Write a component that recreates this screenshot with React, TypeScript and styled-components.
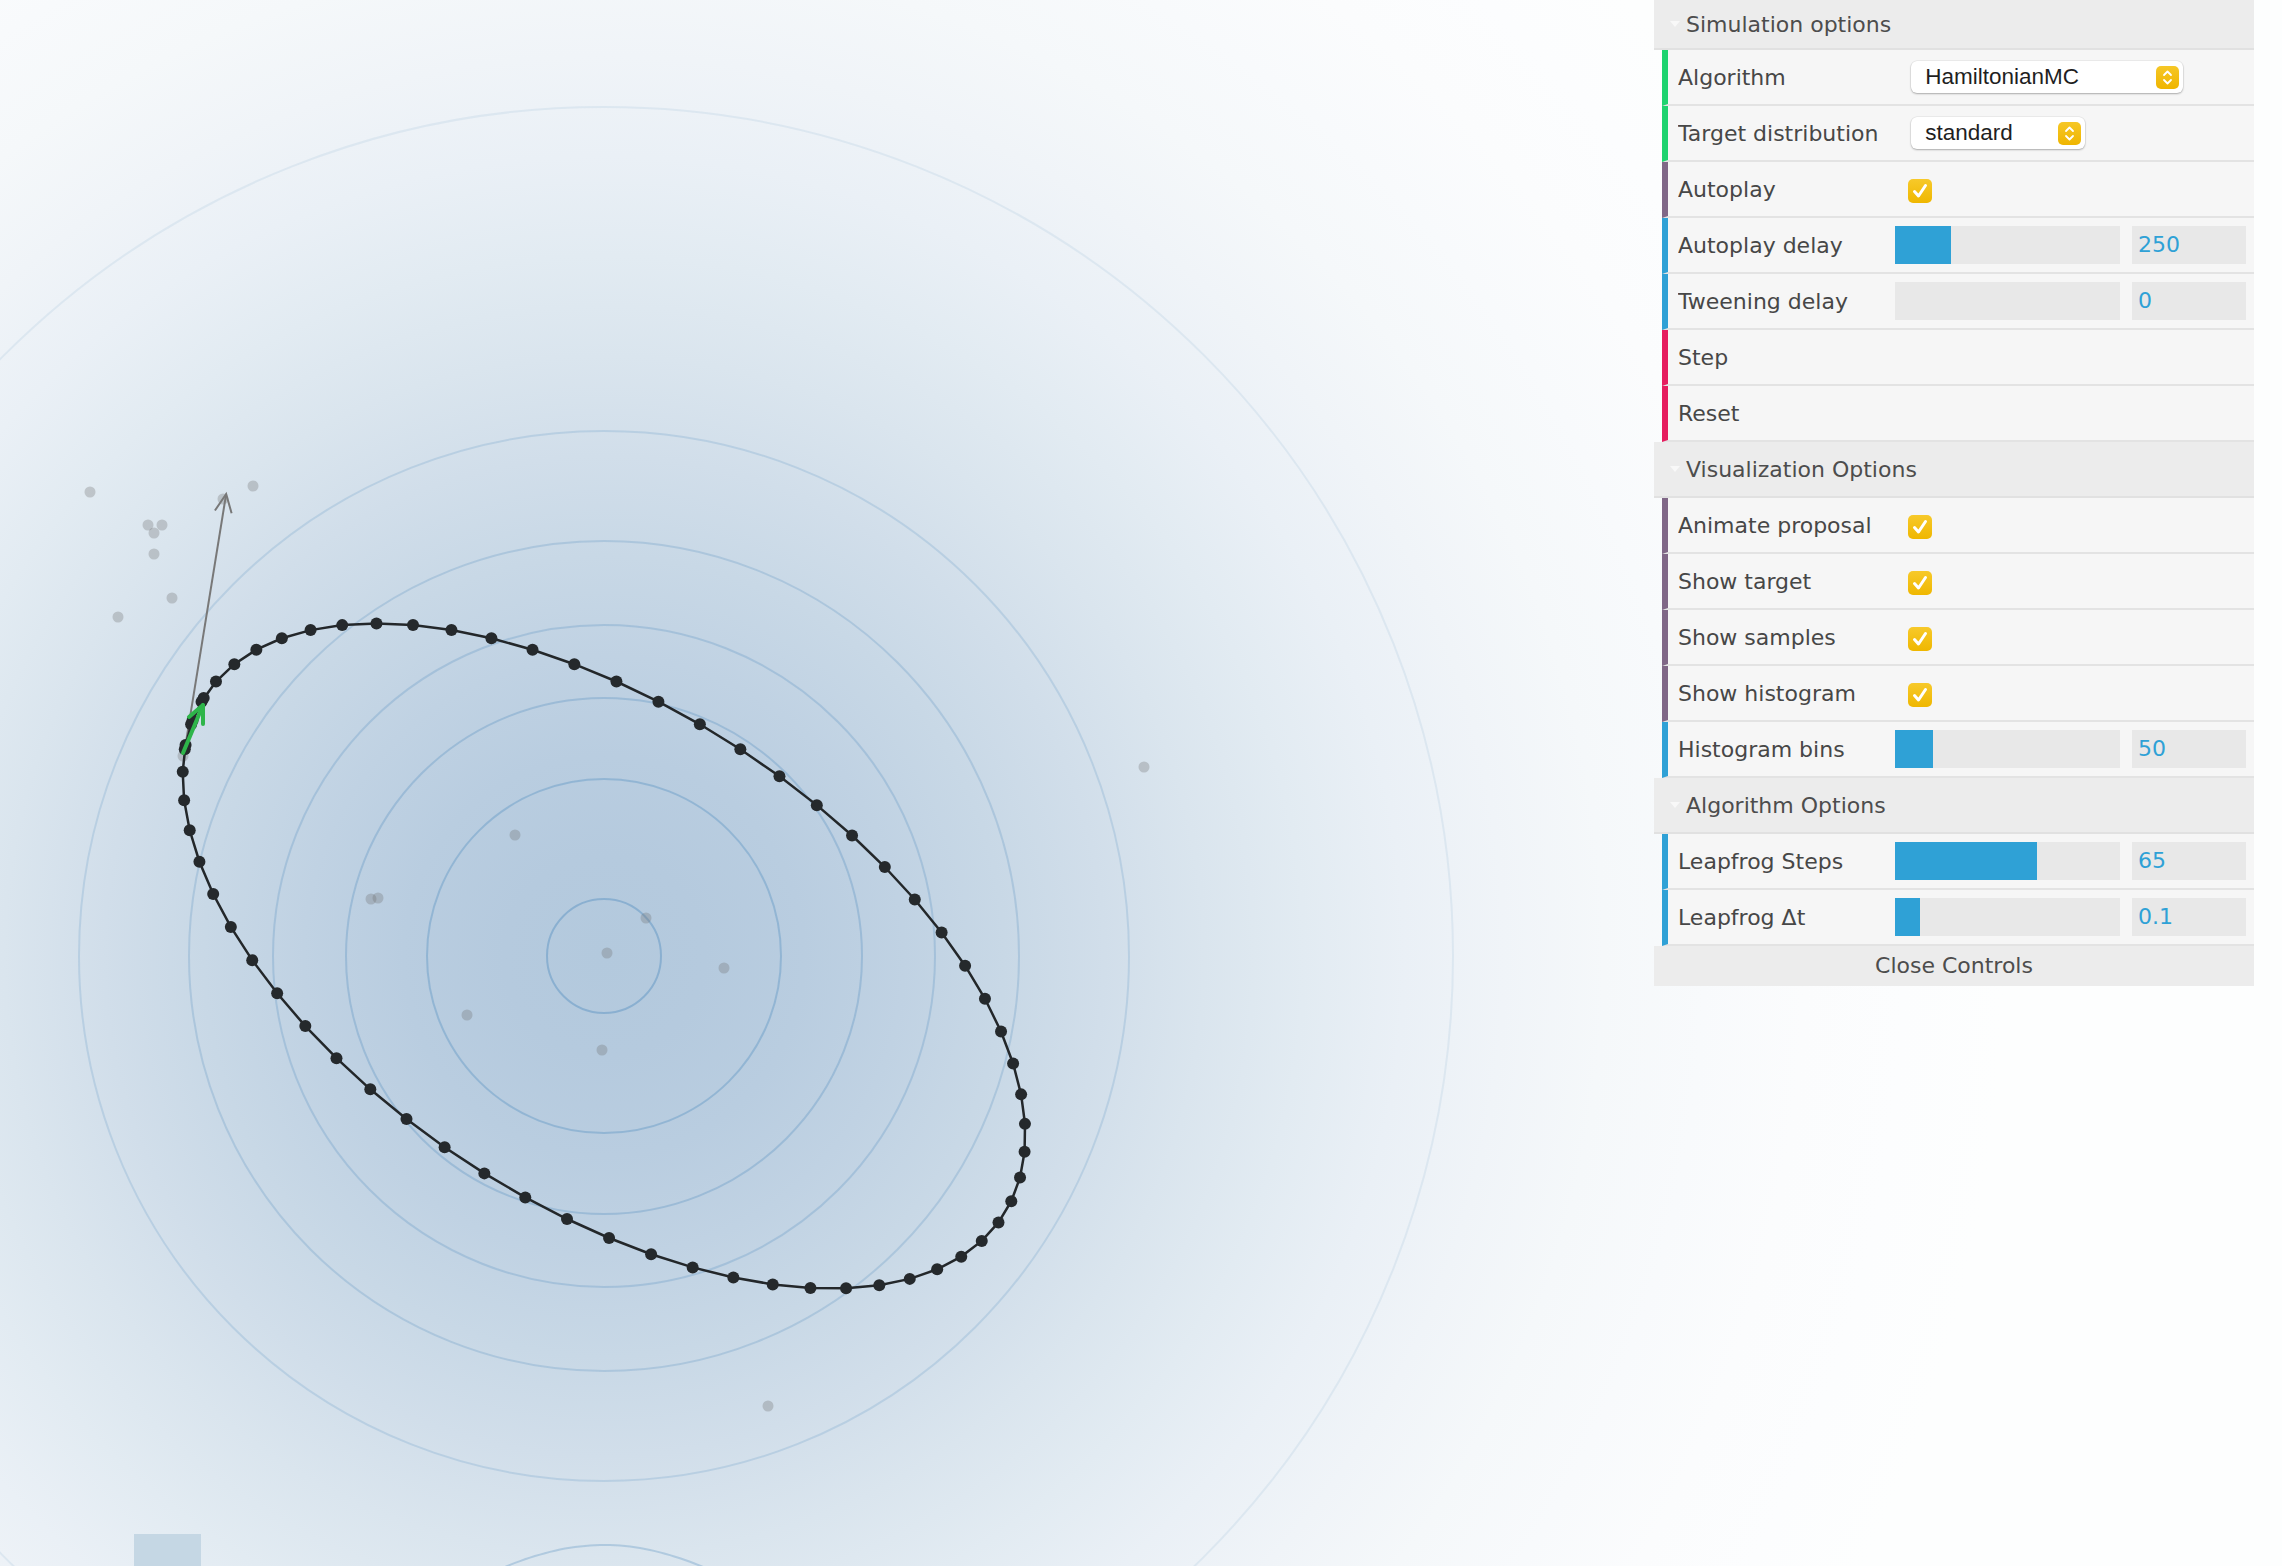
import React from "react";
import styled, { createGlobalStyle } from "styled-components";

const GlobalStyle = createGlobalStyle`
  html, body {
    margin: 0;
    padding: 0;
    background: #fff;
    overflow: hidden;
  }
  #root {
    width: 100vw;
    height: 100vh;
  }
`;

const Stage = styled.div`
  position: relative;
  width: 100vw;
  height: 100vh;
  overflow: hidden;
  background: #fff;
`;

const Canvas = styled.svg`
  display: block;
  width: 100%;
  height: 100%;
`;

const Gui = styled.div`
  position: absolute;
  top: 0;
  right: 28px;
  width: 600px;
  font-family: "DejaVu Sans", "Liberation Sans", sans-serif;
  font-size: 22px;
  color: #474747;
`;

const FolderTitle = styled.div<{ $h?: number }>`
  display: flex;
  align-items: center;
  height: ${(p) => p.$h ?? 54}px;
  padding-left: 16px;
  background: #ececec;
  border-bottom: 2px solid #e1e1e1;
  color: #4d4d4d;
`;

const Caret = styled.span`
  width: 0;
  height: 0;
  border-left: 5px solid transparent;
  border-right: 5px solid transparent;
  border-top: 6px solid #f8f8f8;
  margin-right: 6px;
`;

const Row = styled.div<{ $accent: string }>`
  display: flex;
  align-items: center;
  height: 54px;
  margin-left: 8px;
  padding: 0 8px 0 10px;
  background: #f6f6f6;
  border-left: 6px solid ${(p) => p.$accent};
  border-bottom: 2px solid #e3e3e3;
`;

const Label = styled.div`
  width: 40%;
  flex: none;
  white-space: nowrap;
  overflow: hidden;
`;

const Control = styled.div`
  flex: 1;
  display: flex;
  align-items: center;
  min-width: 0;
`;

const SliderTrack = styled.div`
  width: 66%;
  height: 38px;
  margin-left: -10px;
  background: #e8e8e8;
  display: flex;
`;

const SliderFill = styled.div<{ $pct: number }>`
  width: ${(p) => p.$pct}%;
  height: 100%;
  background: #2fa1d6;
`;

const ValueBox = styled.div`
  margin-left: auto;
  width: 114px;
  height: 38px;
  line-height: 38px;
  padding-left: 6px;
  box-sizing: border-box;
  background: #e8e8e8;
  color: #2fa1d6;
`;

const Select = styled.div<{ $w: number }>`
  margin-left: 6px;
  width: ${(p) => p.$w}px;
  height: 32px;
  box-sizing: border-box;
  display: flex;
  align-items: center;
  justify-content: space-between;
  padding: 0 4px 0 14px;
  background: #fff;
  border-radius: 6px;
  box-shadow: 0 1px 2px rgba(0, 0, 0, 0.28), 0 0 0 0.5px rgba(0, 0, 0, 0.08);
  font-family: "Liberation Sans", Arial, sans-serif;
  font-size: 22.5px;
  color: #1f1f1f;
`;

const Stepper = styled.span`
  width: 23px;
  height: 23px;
  border-radius: 5px;
  background: linear-gradient(#f6c726, #efb500);
  display: flex;
  align-items: center;
  justify-content: center;
`;

const Checkbox = styled.span`
  margin-left: 3px;
  margin-top: 4px;
  width: 24px;
  height: 24px;
  border-radius: 5px;
  background: linear-gradient(#f7c92a, #efb700);
  display: flex;
  align-items: center;
  justify-content: center;
`;

const CloseBar = styled.div`
  height: 40px;
  line-height: 40px;
  text-align: center;
  background: #ececec;
  color: #4d4d4d;
`;

const ACCENT = {
  option: "#1ed36f",
  bool: "#806787",
  number: "#2fa1d6",
  func: "#e61d5f",
};

const StepperIcon = () => (
  <svg width="11" height="17" viewBox="0 0 11 17">
    <path d="M2 6 L5.5 2.5 L9 6 M2 11 L5.5 14.5 L9 11" fill="none" stroke="#fff" strokeWidth="1.8" strokeLinecap="round" strokeLinejoin="round" />
  </svg>
);

const CheckIcon = () => (
  <svg width="18" height="18" viewBox="0 0 18 18">
    <path d="M3.5 9.5 L7.5 14 L14.5 3.5" fill="none" stroke="#fff" strokeWidth="3" strokeLinecap="round" strokeLinejoin="round" />
  </svg>
);

const SelectRow = ({ label, value, width }: { label: string; value: string; width: number }) => (
  <Row $accent={ACCENT.option}>
    <Label>{label}</Label>
    <Control>
      <Select $w={width}>
        <span>{value}</span>
        <Stepper>
          <StepperIcon />
        </Stepper>
      </Select>
    </Control>
  </Row>
);

const BoolRow = ({ label }: { label: string }) => (
  <Row $accent={ACCENT.bool}>
    <Label>{label}</Label>
    <Control>
      <Checkbox>
        <CheckIcon />
      </Checkbox>
    </Control>
  </Row>
);

const NumberRow = ({ label, value, pct }: { label: string; value: string; pct: number }) => (
  <Row $accent={ACCENT.number}>
    <Label>{label}</Label>
    <Control>
      <SliderTrack>
        <SliderFill $pct={pct} />
      </SliderTrack>
      <ValueBox>{value}</ValueBox>
    </Control>
  </Row>
);

const FuncRow = ({ label }: { label: string }) => (
  <Row $accent={ACCENT.func}>
    <Label>{label}</Label>
  </Row>
);

// --- canvas drawing ---
const CX = 604;
const CY = 956;
const SIGMA = 500;
const BASE = [179, 201, 221];

const gradientStops = Array.from({ length: 15 }, (_, i) => {
  const r = i * 100;
  const t = Math.exp(-(r * r) / (2 * SIGMA * SIGMA));
  const c = BASE.map((b) => Math.round(255 - t * (255 - b)));
  return { offset: r / 1400, color: `rgb(${c[0]},${c[1]},${c[2]})` };
});

const contours = [
  { r: 57, o: 0.42 },
  { r: 177, o: 0.36 },
  { r: 258, o: 0.3 },
  { r: 331, o: 0.26 },
  { r: 415, o: 0.24 },
  { r: 525, o: 0.2 },
  { r: 849, o: 0.1 },
];

const Q0 = [-419.2, -206.7];
const P0 = [42.2, -260.5];
const trajectory = Array.from({ length: 66 }, (_, k) => {
  const t = k * 0.1;
  const c = Math.cos(t);
  const s = Math.sin(t);
  return [CX + c * Q0[0] + s * P0[0], CY + c * Q0[1] + s * P0[1]];
});

const samples = [
  [90, 492], [223, 499], [253, 486], [148, 525], [162, 525], [154, 533],
  [154, 554], [172, 598], [118, 617], [1144, 767], [515, 835], [371, 899],
  [378, 898], [646, 918], [607, 953], [724, 968], [467, 1015], [602, 1050],
  [768, 1406], [183, 756],
];

const start = [CX + Q0[0], CY + Q0[1]];
const tip = [start[0] + P0[0] * 0.98, start[1] + P0[1] * 0.98];
const wing = (sign: number) => {
  const len = Math.hypot(P0[0], P0[1]);
  const bx = -P0[0] / len;
  const by = -P0[1] / len;
  const a = (sign * 25 * Math.PI) / 180;
  const rx = bx * Math.cos(a) - by * Math.sin(a);
  const ry = bx * Math.sin(a) + by * Math.cos(a);
  return `${tip[0] + rx * 20},${tip[1] + ry * 20}`;
};

const marginalPath = (() => {
  const pts: string[] = [];
  for (let x = 300; x <= 910; x += 5) {
    const y = 1696 - 151 * Math.exp(-((x - CX) * (x - CX)) / (2 * 177 * 177));
    pts.push(`${x},${y.toFixed(1)}`);
  }
  return pts.join(" ");
})();

const Plot = () => (
  <Canvas viewBox="0 0 2282 1566" preserveAspectRatio="xMinYMin slice">
    <defs>
      <radialGradient id="density" gradientUnits="userSpaceOnUse" cx={CX} cy={CY} r={1400}>
        {gradientStops.map((s) => (
          <stop key={s.offset} offset={s.offset} stopColor={s.color} />
        ))}
      </radialGradient>
    </defs>
    <rect x="0" y="0" width="2282" height="1566" fill="url(#density)" />
    {contours.map((c) => (
      <circle key={c.r} cx={CX} cy={CY} r={c.r} fill="none" stroke="rgb(80,140,190)" strokeOpacity={c.o} strokeWidth="2" />
    ))}
    <polyline points={marginalPath} fill="none" stroke="rgb(80,140,190)" strokeOpacity="0.3" strokeWidth="2" />
    <rect x="134" y="1534" width="67" height="40" fill="#c5d7e4" />
    {samples.map(([x, y], i) => (
      <circle key={i} cx={x} cy={y} r="5.5" fill="rgb(110,110,110)" fillOpacity="0.3" />
    ))}
    <line x1={start[0]} y1={start[1]} x2={tip[0]} y2={tip[1]} stroke="#787878" strokeWidth="2" />
    <polyline points={`${wing(1)} ${tip[0]},${tip[1]} ${wing(-1)}`} fill="none" stroke="#787878" strokeWidth="2" />
    <polyline
      points={trajectory.map((p) => `${p[0].toFixed(1)},${p[1].toFixed(1)}`).join(" ")}
      fill="none"
      stroke="#23272a"
      strokeWidth="2.5"
    />
    {trajectory.map(([x, y], i) => (
      <circle key={i} cx={x} cy={y} r="6" fill="#25292c" />
    ))}
    <line x1="183" y1="753" x2="203" y2="705" stroke="#2eb54a" strokeWidth="4" strokeLinecap="round" />
    <polyline points="189,717 203,705 203,724" fill="none" stroke="#2eb54a" strokeWidth="4" strokeLinecap="round" strokeLinejoin="round" />
  </Canvas>
);

const App = () => (
  <Stage>
    <GlobalStyle />
    <Plot />
    <Gui>
      <FolderTitle $h={48}>
        <Caret />
        Simulation options
      </FolderTitle>
      <SelectRow label="Algorithm" value="HamiltonianMC" width={272} />
      <SelectRow label="Target distribution" value="standard" width={174} />
      <BoolRow label="Autoplay" />
      <NumberRow label="Autoplay delay" value="250" pct={25} />
      <NumberRow label="Tweening delay" value="0" pct={0} />
      <FuncRow label="Step" />
      <FuncRow label="Reset" />
      <FolderTitle>
        <Caret />
        Visualization Options
      </FolderTitle>
      <BoolRow label="Animate proposal" />
      <BoolRow label="Show target" />
      <BoolRow label="Show samples" />
      <BoolRow label="Show histogram" />
      <NumberRow label="Histogram bins" value="50" pct={17} />
      <FolderTitle>
        <Caret />
        Algorithm Options
      </FolderTitle>
      <NumberRow label="Leapfrog Steps" value="65" pct={63} />
      <NumberRow label="Leapfrog Δt" value="0.1" pct={11} />
      <CloseBar>Close Controls</CloseBar>
    </Gui>
  </Stage>
);

export default App;
